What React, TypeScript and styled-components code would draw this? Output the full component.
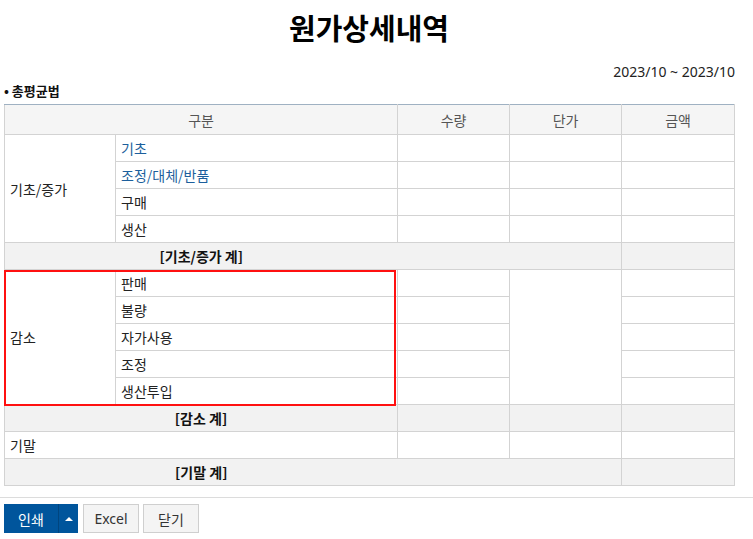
import React from "react";
import styled, { createGlobalStyle } from "styled-components";

const GlobalStyle = createGlobalStyle`
    html, body {
        margin: 0;
        padding: 0;
        background: #fff;
    }
    body {
        font-family: "Noto Sans", "Noto Sans CJK KR", sans-serif;
        font-size: 14px;
        color: #222;
    }
`;

const Page = styled.div`
    display: flex;
    flex-direction: column;
    width: 753px;
`;

const Content = styled.div`
    display: flex;
    flex-direction: column;
    padding: 0 19px 0 4px;
`;

const Title = styled.h1`
    margin: 0;
    padding-top: 5px;
    height: 57px;
    text-align: center;
    font-family: "Noto Sans CJK KR", sans-serif;
    font-size: 29px;
    font-weight: 700;
    line-height: 44px;
    color: #000;
`;

const Period = styled.div`
    text-align: right;
    line-height: 20px;
    height: 20px;
    margin-right: -1px;
    font-size: 14px;
    color: #222;
`;

const Method = styled.div`
    font-family: "Noto Sans CJK KR", sans-serif;
    font-size: 13px;
    font-weight: 700;
    line-height: 18px;
    height: 22px;
    color: #111;
`;

const TableWrap = styled.div`
    position: relative;
    width: 730px;
`;

const Grid = styled.table`
    width: 731px;
    border-collapse: collapse;
    table-layout: fixed;
    font-family: "Noto Sans CJK KR", sans-serif;
    font-size: 14px;
`;

const Head = styled.th`
    height: 29px;
    padding: 0;
    background: #f5f5f5;
    border: 1px solid #d3d3d3;
    border-top: 1px solid #9fb1c2;
    color: #555;
    font-weight: 400;
    text-align: center;
`;

const Cell = styled.td<{ $link?: boolean }>`
    height: 26px;
    padding: 0 5px;
    border: 1px solid #d3d3d3;
    background: #fff;
    color: ${(props) => (props.$link ? "#1c5f9c" : "#222")};
    text-align: left;
    white-space: nowrap;
`;

const SumCell = styled.td<{ $bare?: boolean }>`
    height: 26px;
    padding: 0;
    background: #f2f2f2;
    border: 1px solid #d3d3d3;
    ${(props) => props.$bare && "border-left-style: hidden;"}
    font-weight: 700;
    color: #111;
    text-align: center;
`;

const Highlight = styled.div`
    position: absolute;
    left: 0;
    top: 166px;
    width: 392px;
    height: 136px;
    box-sizing: border-box;
    border: 2px solid #ff1010;
    pointer-events: none;
`;

const Footer = styled.div`
    display: flex;
    gap: 4px;
    margin-top: 11px;
    padding: 6px 4px 0;
    border-top: 1px solid #dcdcdc;
`;

const Split = styled.div`
    display: flex;
    height: 29px;
    margin-right: 1px;
    background: #00559c;
`;

const MainButton = styled.button`
    width: 55px;
    height: 29px;
    border: none;
    border-right: 1px solid #00457f;
    background: #00559c;
    color: #fff;
    font-family: "Noto Sans CJK KR", sans-serif;
    font-size: 14px;
    padding: 0;
`;

const ArrowButton = styled.button`
    display: flex;
    align-items: center;
    justify-content: center;
    width: 19px;
    height: 29px;
    border: none;
    background: #00559c;
    padding: 0;
`;

const Caret = styled.span`
    width: 0;
    height: 0;
    border-left: 4px solid transparent;
    border-right: 4px solid transparent;
    border-bottom: 4px solid #fff;
`;

const GreyButton = styled.button`
    width: 56px;
    height: 29px;
    box-sizing: border-box;
    border: 1px solid #cfcfcf;
    background: #f4f4f4;
    color: #333;
    font-family: "Noto Sans", "Noto Sans CJK KR", sans-serif;
    font-size: 14px;
    padding: 0;
`;

const increaseRows = [
    { label: "기초", link: true },
    { label: "조정/대체/반품", link: true },
    { label: "구매", link: false },
    { label: "생산", link: false },
];

const decreaseRows = ["판매", "불량", "자가사용", "조정", "생산투입"];

export default function App() {
    return (
        <Page>
            <GlobalStyle />
            <Content>
                <Title>원가상세내역</Title>
                <Period>2023/10 ~ 2023/10</Period>
                <Method>• 총평균법</Method>
                <TableWrap>
                    <Grid>
                        <colgroup>
                            <col style={{ width: 111 }} />
                            <col style={{ width: 282 }} />
                            <col style={{ width: 112 }} />
                            <col style={{ width: 112 }} />
                            <col style={{ width: 113 }} />
                        </colgroup>
                        <thead>
                            <tr>
                                <Head colSpan={2}>구분</Head>
                                <Head>수량</Head>
                                <Head>단가</Head>
                                <Head>금액</Head>
                            </tr>
                        </thead>
                        <tbody>
                            {increaseRows.map((row, i) => (
                                <tr key={row.label}>
                                    {i === 0 && <Cell rowSpan={4}>기초/증가</Cell>}
                                    <Cell $link={row.link}>{row.label}</Cell>
                                    <Cell />
                                    <Cell />
                                    <Cell />
                                </tr>
                            ))}
                            <tr>
                                <SumCell colSpan={2}>[기초/증가 계]</SumCell>
                                <SumCell colSpan={2} $bare />
                                <SumCell />
                            </tr>
                            {decreaseRows.map((label, i) => (
                                <tr key={label}>
                                    {i === 0 && <Cell rowSpan={5}>감소</Cell>}
                                    <Cell>{label}</Cell>
                                    <Cell />
                                    {i === 0 && <Cell rowSpan={5} />}
                                    <Cell />
                                </tr>
                            ))}
                            <tr>
                                <SumCell colSpan={2}>[감소 계]</SumCell>
                                <SumCell />
                                <SumCell />
                                <SumCell />
                            </tr>
                            <tr>
                                <Cell colSpan={2}>기말</Cell>
                                <Cell />
                                <Cell />
                                <Cell />
                            </tr>
                            <tr>
                                <SumCell colSpan={2}>[기말 계]</SumCell>
                                <SumCell colSpan={2} $bare />
                                <SumCell />
                            </tr>
                        </tbody>
                    </Grid>
                    <Highlight />
                </TableWrap>
            </Content>
            <Footer>
                <Split>
                    <MainButton>인쇄</MainButton>
                    <ArrowButton>
                        <Caret />
                    </ArrowButton>
                </Split>
                <GreyButton>Excel</GreyButton>
                <GreyButton>닫기</GreyButton>
            </Footer>
        </Page>
    );
}
